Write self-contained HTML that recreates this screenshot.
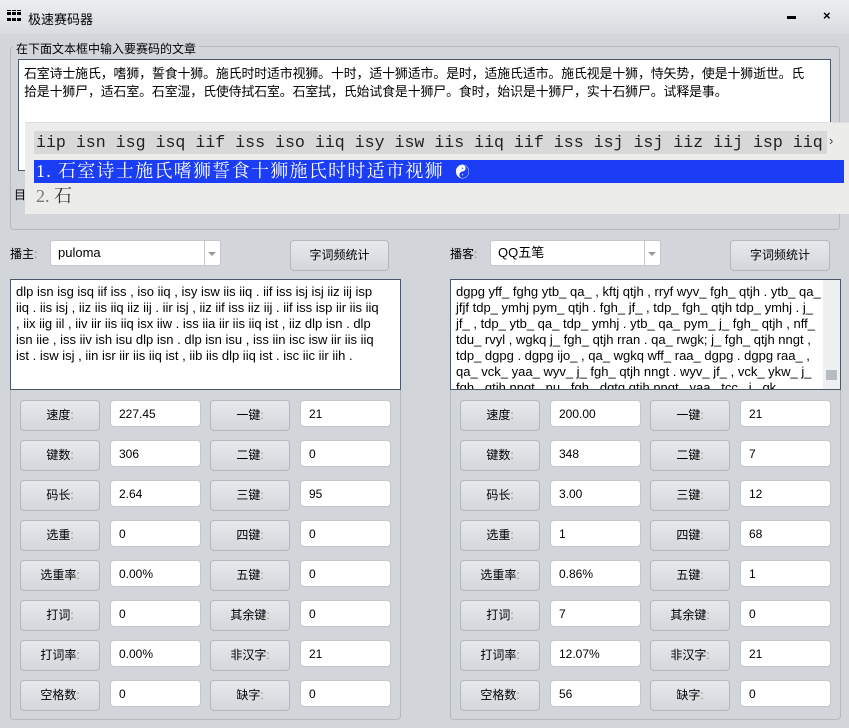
<!DOCTYPE html><html><head><meta charset="utf-8"><style>
*{box-sizing:border-box;margin:0;padding:0}
body{width:849px;height:728px;background:#d2d6db;font-family:"Liberation Sans","Noto Sans CJK SC",sans-serif;font-size:12px;color:#000;position:relative;overflow:hidden}
.a{position:absolute}
.title{left:0;top:0;width:849px;height:34px;background:linear-gradient(#eceef0,#d8dce0)}
.grp{border:1px solid #b4b9be;border-radius:4px}
.ta{background:#fff;border:1px solid #4a5868;padding:4px 5px;line-height:16px;font-size:13px;color:#000}
.btn{border:1px solid #b3b8bd;border-radius:4px;background:linear-gradient(#e6e9ec,#d3d7db);text-align:center;line-height:29px;font-size:12px}
.inp{background:#fff;border:1px solid #c4c8cc;border-radius:4px;padding-left:8px;line-height:26px;font-size:12px}
.combo{background:#fff;border:1px solid #c4c8cc;border-radius:3px;padding-left:7px;line-height:24px}
.combo:after{content:"";position:absolute;right:0;top:0;width:15px;height:24px;border-left:1px solid #c4c8cc}
.tri{position:absolute;right:4px;top:11px;border-left:4px solid transparent;border-right:4px solid transparent;border-top:4px solid #999}
.c{color:#a08040}
</style></head><body>
<div class="a title"></div>
<div class="a" style="left:7px;top:10px;width:14px;height:12px;display:grid;grid-template-columns:repeat(3,4px);gap:1px">
<i style="background:#000"></i><i style="background:#000"></i><i style="background:#000"></i><i style="background:#000;height:3px"></i><i style="background:#000;height:3px"></i><i style="background:#000;height:3px"></i><i style="background:#000;height:3px"></i><i style="background:#000;height:3px"></i><i style="background:#000;height:3px"></i></div>
<div class="a" style="left:28px;top:9px;font-size:13px">极速赛码器</div>
<div class="a" style="left:787px;top:16px;width:9px;height:3px;background:#000"></div>
<div class="a" style="left:823px;top:8px;font-size:13px;font-weight:bold">×</div>

<div class="a grp" style="left:10px;top:46px;width:830px;height:184px"></div>
<div class="a" style="left:13px;top:40px;background:#d2d6db;padding:0 3px;font-size:12px">在下面文本框中输入要赛码的文章</div>
<div class="a ta" style="left:18px;top:59px;width:813px;height:112px;padding:5px 14px 0 5px;line-height:18px;font-size:12.9px;letter-spacing:-0.1px">石室诗士施氏，嗜狮，誓食十狮。施氏时时适市视狮。十时，适十狮适市。是时，适施氏适市。施氏视是十狮，恃矢势，使是十狮逝世。氏拾是十狮尸，适石室。石室湿，氏使侍拭石室。石室拭，氏始试食是十狮尸。食时，始识是十狮尸，实十石狮尸。试释是事。</div>
<div class="a" style="left:14px;top:186px">目</div>
<div class="a" style="left:25px;top:122px;width:824px;height:92px;background:#ececea;border-top:1px solid #ddd"></div>
<div class="a" style="left:34px;top:131px;width:793px;height:23px;background:#d8d8d8;font-family:'Liberation Mono','Noto Serif CJK SC',monospace;font-size:16.6px;line-height:23px;padding-left:2px;color:#222;white-space:nowrap;overflow:hidden">iip isn isg isq iif iss iso iiq isy isw iis iiq iif iss isj isj iiz iij isp iiq</div>
<div class="a" style="left:829px;top:133px;font-size:13px;color:#444">›</div>
<div class="a" style="left:34px;top:160px;width:810px;height:23px;background:#1a3df5;color:#fff;font-family:'Liberation Serif','Noto Serif CJK SC',serif;font-size:18px;line-height:23px;padding-left:2px;white-space:nowrap;letter-spacing:1.3px">1. 石室诗士施氏嗜狮誓食十狮施氏时时适市视狮 &nbsp;<span style="font-size:14px">☯</span></div>
<div class="a" style="left:34px;top:185px;font-family:'Liberation Serif','Noto Serif CJK SC',serif;font-size:18px;line-height:23px;color:#333;padding-left:2px"><span style="color:#777">2.</span> 石</div>

<div class="a" style="left:10px;top:245px">播主<span class="c">:</span></div>
<div class="a combo" style="left:50px;top:240px;width:171px;height:26px;font-size:13px">puloma<i class="tri"></i></div>
<div class="a btn" style="left:290px;top:240px;width:99px;height:31px">字词频统计</div>
<div class="a" style="left:450px;top:245px">播客<span class="c">:</span></div>
<div class="a combo" style="left:490px;top:240px;width:171px;height:26px;font-size:13px">QQ五笔<i class="tri"></i></div>
<div class="a btn" style="left:730px;top:240px;width:100px;height:31px">字词频统计</div>

<div class="a grp" style="left:10px;top:385px;width:391px;height:335px"></div>
<div class="a grp" style="left:450px;top:385px;width:391px;height:335px"></div>
<div class="a ta" style="left:10px;top:279px;width:391px;height:111px;padding:4px 16px 0 5px">dlp isn isg isq iif iss , iso iiq , isy isw iis iiq . iif iss isj isj iiz iij isp iiq . iis isj , iiz iis iiq iiz iij . iir isj , iiz iif iss iiz iij . iif iss isp iir iis iiq , iix iig iil , iiv iir iis iiq isx iiw . iss iia iir iis iiq ist , iiz dlp isn . dlp isn iie , iss iiv ish isu dlp isn . dlp isn isu , iss iin isc isw iir iis iiq ist . isw isj , iin isr iir iis iiq ist , iib iis dlp iiq ist . isc iic iir iih .</div>
<div class="a ta" style="left:450px;top:279px;width:391px;height:111px;padding:4px 18px 0 5px;overflow:hidden">dgpg yff_ fghg ytb_ qa_ , kftj qtjh , rryf wyv_ fgh_ qtjh . ytb_ qa_ jfjf tdp_ ymhj pym_ qtjh . fgh_ jf_ , tdp_ fgh_ qtjh tdp_ ymhj . j_ jf_ , tdp_ ytb_ qa_ tdp_ ymhj . ytb_ qa_ pym_ j_ fgh_ qtjh , nff_ tdu_ rvyl , wgkq j_ fgh_ qtjh rran . qa_ rwgk; j_ fgh_ qtjh nngt , tdp_ dgpg . dgpg ijo_ , qa_ wgkq wff_ raa_ dgpg . dgpg raa_ , qa_ vck_ yaa_ wyv_ j_ fgh_ qtjh nngt . wyv_ jf_ , vck_ ykw_ j_ fgh_ qtjh nngt . nu_ fgh_ dgtg qtjh nngt . yaa_ tcc_ j_ qk</div>
<div class="a" style="left:823px;top:280px;width:17px;height:109px;background:#eef0f2"></div>
<div class="a" style="left:826px;top:370px;width:11px;height:10px;background:#b8bcc0"></div>

<div id="s"></div>
<script>
var L=[["速度","227.45","一键","21"],["键数","306","二键","0"],["码长","2.64","三键","95"],["选重","0","四键","0"],["选重率","0.00%","五键","0"],["打词","0","其余键","0"],["打词率","0.00%","非汉字","21"],["空格数","0","缺字","0"]];
var R=[["速度","200.00","一键","21"],["键数","348","二键","7"],["码长","3.00","三键","12"],["选重","1","四键","68"],["选重率","0.86%","五键","1"],["打词","7","其余键","0"],["打词率","12.07%","非汉字","21"],["空格数","56","缺字","0"]];
var h="";
[[L,0],[R,440]].forEach(function(p){p[0].forEach(function(r,i){var y=400+i*40,o=p[1];
h+='<div class="a btn" style="left:'+(20+o)+'px;top:'+y+'px;width:80px;height:31px">'+r[0]+'<span class="c">:</span></div>';
h+='<div class="a inp" style="left:'+(110+o)+'px;top:'+y+'px;width:91px;height:27px">'+r[1]+'</div>';
h+='<div class="a btn" style="left:'+(210+o)+'px;top:'+y+'px;width:80px;height:31px">'+r[2]+'<span class="c">:</span></div>';
h+='<div class="a inp" style="left:'+(300+o)+'px;top:'+y+'px;width:91px;height:27px">'+r[3]+'</div>';});});
document.getElementById("s").innerHTML=h;
</script>
</body></html>
